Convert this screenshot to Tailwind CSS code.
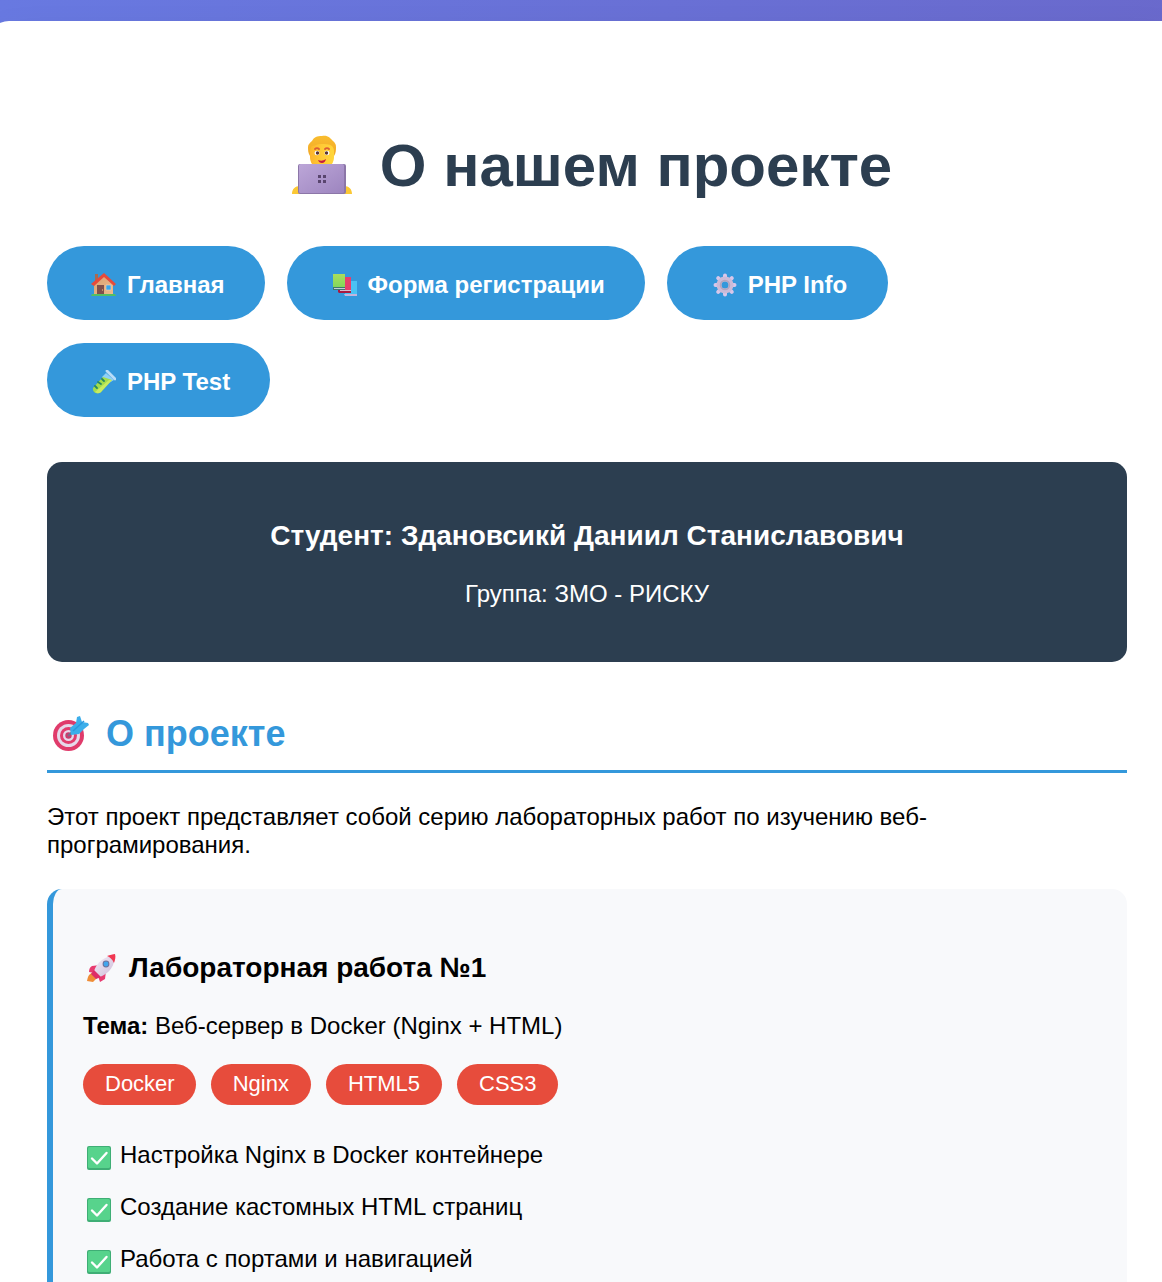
<!DOCTYPE html>
<html lang="ru">
<head>
<meta charset="UTF-8">
<meta name="viewport" content="width=device-width, initial-scale=1">
<title>О нашем проекте</title>
<script src="https://cdn.jsdelivr.net/npm/@tailwindcss/browser@4"></script>
</head>
<body class="overflow-x-hidden bg-[linear-gradient(100deg,#6879e1,#6a66c8)] pt-[21px] font-['Liberation_Sans',Arial,sans-serif] text-2xl leading-7 text-black">
<svg class="absolute size-0" aria-hidden="true">
  <defs>
    <linearGradient id="hair" x1="0" y1="0" x2="0" y2="1"><stop stop-color="#f9bd2e"/><stop offset="1" stop-color="#f2a828"/></linearGradient>
    <linearGradient id="face" x1="0" y1="0" x2="1" y2="0"><stop stop-color="#fdb52b"/><stop offset=".5" stop-color="#ffcb36"/><stop offset="1" stop-color="#ffd63b"/></linearGradient>
    <linearGradient id="lid" x1="0" y1="0" x2="1" y2="1"><stop stop-color="#bca6d8"/><stop offset="1" stop-color="#9d85bf"/></linearGradient>
    <linearGradient id="wall" x1="0" y1="0" x2="1" y2="1"><stop stop-color="#d9a273"/><stop offset="1" stop-color="#efbb8c"/></linearGradient>
    <linearGradient id="green" x1="0" y1="0" x2="0" y2="1"><stop stop-color="#aade5c"/><stop offset="1" stop-color="#7fd65b"/></linearGradient>
    <linearGradient id="body" x1="0" y1="0" x2="1" y2="1"><stop stop-color="#f6eef9"/><stop offset="1" stop-color="#cdbbd7"/></linearGradient>
  </defs>
  <symbol id="check" viewBox="0 0 24 24">
    <rect width="24" height="24" rx="2" fill="#3fae75"/><rect x="1" y="1" width="22" height="21" rx="1.500" fill="#57d38c"/>
    <path d="M5 12.500l5 5L19.500 7" fill="none" stroke="#fff" stroke-width="2.400" stroke-linecap="round" stroke-linejoin="round"/>
  </symbol>
</svg>
<main class="-ml-[13px] -mr-[25px] rounded-[22px] bg-white px-[60px] pt-[111px] pb-[60px] shadow-2xl">
  <h1 class="mb-[46px] flex items-center justify-center gap-[28px] text-[60px] leading-[68px] font-bold text-[#2c3e50]">
    <svg class="mb-1 ml-[10px] h-[60px] w-[60px] shrink-0" viewBox="0 0 60 60" aria-hidden="true">
      <path d="M0 60c0-5 3-8 8-8v8zM60 60c0-5-3-8-8-8v8z" fill="#fbc834"/>
      <path d="M18 22c-2-3-2-6-2-9 0-3 2-4 4-6 2-4 5-5 10-5 6-1 8 2 11 5 2 2 3 3 3 6 0 3 0 6-2 9z" fill="url(#hair)"/>
      <path d="M20 12c3 0 5-2 9-2 4 0 8 0 11 2 1 1 2 3 2 5v6c0 4-2 8-4 9H22c-2-1-4-5-4-9v-6c0-2 1-4 2-5z" fill="url(#face)"/>
      <path d="M23 15c1-1 3-1 4 0M33 15c1-1 3-1 4 0" fill="none" stroke="#dc5d35" stroke-width="1.800" stroke-linecap="round"/>
      <ellipse cx="25" cy="19" rx="2.500" ry="2.200" fill="#fff"/><ellipse cx="35" cy="19" rx="2.500" ry="2.200" fill="#fff"/>
      <circle cx="25.500" cy="19" r="1.700" fill="#593433"/><circle cx="34.500" cy="19" r="1.700" fill="#593433"/>
      <path d="M26 26q4 2 8-1q-1 4-4 4t-4-3" fill="#c61a3f"/>
      <rect x="6" y="30" width="48" height="30" rx="2" fill="#8c76a8"/>
      <rect x="7" y="30" width="45" height="29" rx="1.500" fill="url(#lid)"/>
      <path d="M26 41h3v3h-3zM31 41h3v3h-3zM26 46h3v3h-3zM31 46h3v3h-3z" fill="#59456e"/>
    </svg>
    <span>О нашем проекте</span>
  </h1>

  <nav class="mb-[45px] flex flex-wrap gap-x-[22px] gap-y-[23px] font-bold text-white">
    <a href="#" class="flex items-center gap-[11px] rounded-full bg-[#3498db] pt-[25px] pr-10 pb-[21px] pl-11">
      <svg class="h-6 w-[25px] shrink-0" viewBox="0 0 25 24" aria-hidden="true">
        <path d="M4 1h3v8H4z" fill="#a96952"/><path d="M3 11L13 3l9 8v11H3z" fill="url(#wall)"/>
        <path d="M13 0l12 11-2 2L13 4 3 13l-3-2z" fill="#e64a3b"/><path d="M6 12h7v10H6z" fill="#80504c"/><path d="M11 16h1v2h-1z" fill="#c48d63"/>
        <path d="M15 12h5v5h-5z" fill="#38a6ed" stroke="#f1d6be" stroke-width=".6"/><path d="M1 21h23l1 2H0z" fill="#51bf63"/>
      </svg>
      <span>Главная</span>
    </a>
    <a href="#" class="flex items-center gap-[11px] rounded-full bg-[#3498db] pt-[25px] pr-10 pb-[21px] pl-[46px]">
      <svg class="h-6 w-6 shrink-0" viewBox="0 0 24 24" aria-hidden="true">
        <path d="M12 8h12v14H12z" fill="#4ac2f4"/><path d="M11 21h13v2H12z" fill="#c3b4dc"/>
        <path d="M6 4h12v14H6z" fill="#e73e6b"/><path d="M5 17h13v3H6l-1-1z" fill="#aa1940"/><path d="M7 17h11v1H7z" fill="#d8bbce"/>
        <path d="M0 1h12v14H0z" fill="url(#green)"/><path d="M0 14h12v3H0z" fill="#3c786d"/><path d="M1 15h11v1H1z" fill="#c6cad8"/>
      </svg>
      <span>Форма регистрации</span>
    </a>
    <a href="#" class="flex items-center gap-[11px] rounded-full bg-[#3498db] pt-[25px] pr-[41px] pb-[21px] pl-[46px]">
      <svg class="h-6 w-6 shrink-0" viewBox="0 0 24 24" aria-hidden="true">
        <g fill="none" stroke="#d9c7ea" stroke-width="4" stroke-linecap="round"><path d="M12 2.500v3M12 18.500v3M2.500 12h3M18.500 12h3M5.200 5.200l2 2M16.800 16.800l2 2M18.800 5.200l-2 2M7.200 16.800l-2 2"/></g>
        <circle cx="12" cy="12" r="6" fill="none" stroke="#cbbbd8" stroke-width="5"/><circle cx="12" cy="12" r="4.500" fill="none" stroke="#b3a5bd" stroke-width="1.500"/>
      </svg>
      <span>PHP Info</span>
    </a>
    <a href="#" class="flex items-center gap-[11px] rounded-full bg-[#3498db] pt-[25px] pr-10 pb-[21px] pl-[45px]">
      <svg class="h-6 w-6 shrink-0" viewBox="0 0 24 24" aria-hidden="true">
        <path d="M14 3l8 7-5 3-7-6z" fill="#8fd0f5"/><path d="M11 7l9 3L9 22c-3 3-9 1-8-4z" fill="#a3dd4c"/><path d="M17 10l3 0L9 22c-2 2-5 1-6 0z" fill="#c7ec62"/>
        <path d="M15 1l8 8" stroke="#b8dcf8" stroke-width="2.800" stroke-linecap="round"/>
        <path d="M10 9l2 2M6 12l3 2M3 16l2 2" stroke="#258864" stroke-width="1.800" stroke-linecap="round"/>
      </svg>
      <span>PHP Test</span>
    </a>
  </nav>

  <section class="mb-[51px] rounded-[15px] bg-[#2c3e50] px-[30px] pt-[58px] pb-[54px] text-center text-white">
    <h3 class="mb-7 text-[28px] leading-8 font-bold">Студент: Здановсикй Даниил Станиславович</h3>
    <p>Группа: ЗМО - РИСКУ</p>
  </section>

  <h2 class="mb-[30px] flex items-center gap-[17px] border-b-[3px] border-[#3498db] pb-[15px] pl-[6px] text-4xl leading-[42px] font-bold text-[#3498db]">
    <svg class="h-9 w-9 shrink-0" viewBox="0 0 36 36" aria-hidden="true">
      <circle cx="15.500" cy="19.500" r="15.500" fill="#e03b6b"/><circle cx="15.500" cy="19.500" r="11.500" fill="#e6d9ea"/><circle cx="15.500" cy="19.500" r="8.500" fill="#e23d6d"/><circle cx="15.500" cy="19.500" r="5.500" fill="#e6d9ea"/><circle cx="15.500" cy="19.500" r="3.200" fill="#c83e6c"/>
      <path d="M15 20l7-7" stroke="#75708c" stroke-width="2"/><path d="M17 12l6-5 1-6 3-1 2 6 6 1 1 2-5 4-5 5-8 1z" fill="#3caeea"/><path d="M20 15L31 5" stroke="#2b98dd" stroke-width="1.500"/>
    </svg>
    <span>О проекте</span>
  </h2>
  <p class="mb-[30px]">Этот проект представляет собой серию лабораторных работ по изучению веб-програмирования.</p>

  <article class="rounded-[15px] border-l-6 border-[#3498db] bg-[#f8f9fb] px-[30px] pt-[63px] pb-[30px]">
    <h3 class="mb-7 flex items-center gap-[12px] pl-1 text-[28px] leading-8 font-bold">
      <svg class="h-7 w-[30px] shrink-0" viewBox="0 0 30 28" aria-hidden="true">
        <path d="M5 19l5 5-4 4-6-1c1-5 2-7 5-8z" fill="#ef8d37"/><path d="M5 12l8-1-6 8-5-1c0-3 1-5 3-6zM19 17l-1 8-5 3-2-6z" fill="#e83b70"/>
        <path d="M28 1c0 10-5 18-15 22l-6-6C10 8 18 2 28 1z" fill="url(#body)"/><path d="M28 0c1 3 0 6-1 9-2-4-4-6-7-7 3-1 6-2 8-2z" fill="#f13852"/>
        <path d="M7 16l7 7-5 2-5-5z" fill="#dd2d68"/><circle cx="19" cy="10" r="3.400" fill="#6e719d"/><circle cx="19" cy="10" r="2.400" fill="#42a5ed"/>
      </svg>
      <span>Лабораторная работа №1</span>
    </h3>
    <p class="mb-6"><strong>Тема:</strong> Веб-сервер в Docker (Nginx + HTML)</p>
    <div class="mb-9 flex flex-wrap gap-[15px] text-[22px] leading-[25px] text-white">
      <span class="rounded-full bg-[#e74c3c] pt-[7px] pr-[21px] pb-[9px] pl-[22px]">Docker</span>
      <span class="rounded-full bg-[#e74c3c] px-[22px] pt-[7px] pb-[9px]">Nginx</span>
      <span class="rounded-full bg-[#e74c3c] px-[22px] pt-[7px] pb-[9px]">HTML5</span>
      <span class="rounded-full bg-[#e74c3c] pt-[7px] pr-[21px] pb-[9px] pl-[22px]">CSS3</span>
    </div>
    <ul class="flex flex-col gap-6">
      <li class="flex items-end gap-[9px] pl-1"><svg class="-mb-px h-6 w-6 shrink-0" aria-hidden="true"><use href="#check"/></svg><span>Настройка Nginx в Docker контейнере</span></li>
      <li class="flex items-end gap-[9px] pl-1"><svg class="-mb-px h-6 w-6 shrink-0" aria-hidden="true"><use href="#check"/></svg><span>Создание кастомных HTML страниц</span></li>
      <li class="flex items-end gap-[9px] pl-1"><svg class="-mb-px h-6 w-6 shrink-0" aria-hidden="true"><use href="#check"/></svg><span>Работа с портами и навигацией</span></li>
    </ul>
  </article>
</main>
</body>
</html>
